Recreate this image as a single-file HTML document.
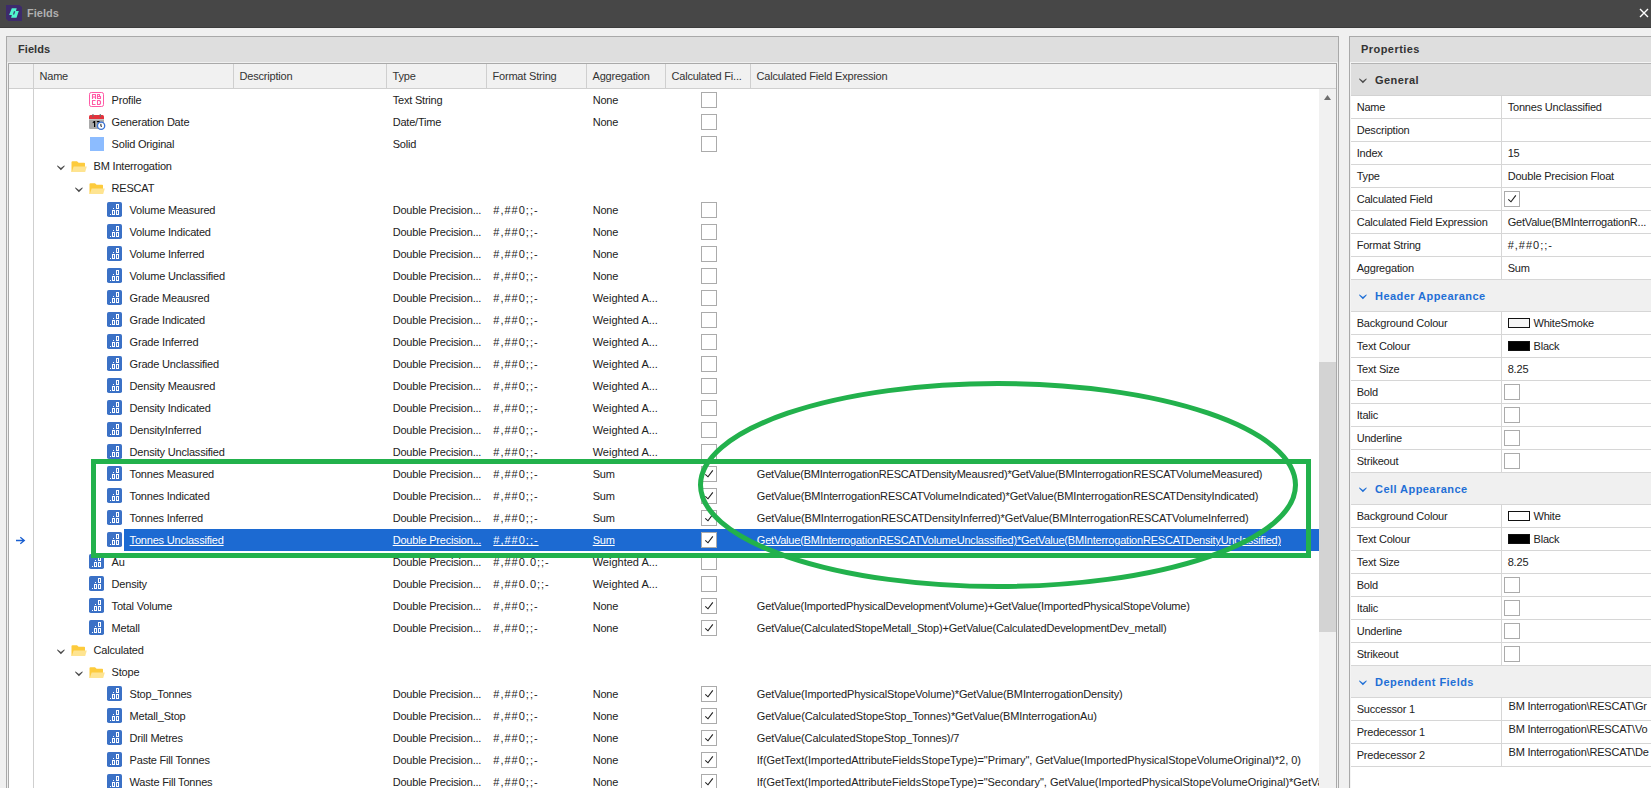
<!DOCTYPE html>
<html><head><meta charset="utf-8"><style>
html,body{margin:0;padding:0}
body{width:1651px;height:788px;overflow:hidden;position:relative;background:#f0f0f0;font-family:"Liberation Sans", sans-serif;font-size:11px}
body div, body svg{position:absolute}
.t{white-space:pre;letter-spacing:-0.2px}
</style></head><body>
<div style="left:0px;top:0px;width:1651px;height:27px;background:#474747"></div>
<div style="left:0px;top:27px;width:1651px;height:1px;background:#3c3c3c"></div>
<svg style="left:6px;top:5px;" width="16" height="16" viewBox="0 0 16 16"><path d="M0 0H13.5L16 2.2V16H2.2L0 13.5Z" fill="#3d2b6c"/><path d="M5.8 3.2H10.7L9.9 6.2H7.9L6.9 9.9H3.1Z" fill="#50f5cd"/><path d="M9.3 5.9H12.8L10.5 12.8H5.1L6.0 9.6H8.2Z" fill="#50f5cd"/></svg>
<div class="t" style="left:27px;top:2px;height:22px;line-height:22px;font-weight:bold;font-size:11px;color:#b0b0b0;letter-spacing:0">Fields</div>
<svg style="left:1639px;top:8px;" width="10" height="10" viewBox="0 0 10 10"><path d="M1 1L9 9M9 1L1 9" stroke="#ffffff" stroke-width="1.4"/></svg>
<div style="left:6px;top:36px;width:1333px;height:760px;background:#f0f0f0;border:1px solid #a9a9a9;box-sizing:border-box"></div>
<div style="left:7px;top:37px;width:1331px;height:25px;background:#dedede"></div>
<div class="t" style="left:18px;top:38px;height:22px;line-height:22px;font-weight:bold;font-size:11px;color:#333333;letter-spacing:0.05px">Fields</div>
<div style="left:8px;top:63px;width:1329px;height:740px;background:#ffffff;border:1px solid #a9a9a9;box-sizing:border-box"></div>
<div style="left:9px;top:64px;width:1327px;height:24px;background:#f1f1f1"></div>
<div style="left:9px;top:88px;width:1310px;height:1px;background:#cfcfcf"></div>
<div style="left:1319px;top:88px;width:17px;height:1px;background:#cfcfcf"></div>
<div style="left:33px;top:64px;width:1px;height:730px;background:#cfcfcf"></div>
<div style="left:233px;top:64px;width:1px;height:24px;background:#cfcfcf"></div>
<div style="left:386px;top:64px;width:1px;height:24px;background:#cfcfcf"></div>
<div style="left:486px;top:64px;width:1px;height:24px;background:#cfcfcf"></div>
<div style="left:586px;top:64px;width:1px;height:24px;background:#cfcfcf"></div>
<div style="left:665px;top:64px;width:1px;height:24px;background:#cfcfcf"></div>
<div style="left:750px;top:64px;width:1px;height:24px;background:#cfcfcf"></div>
<div class="t" style="left:39.5px;top:65px;height:22px;line-height:22px;color:#333333">Name</div>
<div class="t" style="left:239.5px;top:65px;height:22px;line-height:22px;color:#333333">Description</div>
<div class="t" style="left:392.5px;top:65px;height:22px;line-height:22px;color:#333333">Type</div>
<div class="t" style="left:492.5px;top:65px;height:22px;line-height:22px;color:#333333">Format String</div>
<div class="t" style="left:592.5px;top:65px;height:22px;line-height:22px;color:#333333">Aggregation</div>
<div class="t" style="left:671.5px;top:65px;height:22px;line-height:22px;color:#333333">Calculated Fi...</div>
<div class="t" style="left:756.5px;top:65px;height:22px;line-height:22px;color:#333333">Calculated Field Expression</div>
<div style="left:1319px;top:89px;width:17px;height:700px;background:#f1f1f1"></div>
<div style="left:1319px;top:362px;width:17px;height:270px;background:#d3d3d3"></div>
<svg style="left:1323px;top:94px;" width="9" height="7" viewBox="0 0 9 7"><path d="M1 6H8L4.5 1Z" fill="#6e6e6e"/></svg>
<div style="left:9px;top:89px;width:1310px;height:699px;overflow:hidden">
<div class="t" style="left:102.6px;top:0px;height:22px;line-height:22px;color:#222222;">Profile</div>
<div class="t" style="left:383.7px;top:0px;height:22px;line-height:22px;color:#222222;">Text String</div>
<div class="t" style="left:583.7px;top:0px;height:22px;line-height:22px;color:#222222;">None</div>
<svg style="left:692px;top:3px;" width="16" height="16" viewBox="0 0 16 16"><rect x="0.5" y="0.5" width="15" height="15" fill="#ffffff" stroke="#ababab"/></svg>
<div class="t" style="left:102.6px;top:22px;height:22px;line-height:22px;color:#222222;">Generation Date</div>
<div class="t" style="left:383.7px;top:22px;height:22px;line-height:22px;color:#222222;">Date/Time</div>
<div class="t" style="left:583.7px;top:22px;height:22px;line-height:22px;color:#222222;">None</div>
<svg style="left:692px;top:25px;" width="16" height="16" viewBox="0 0 16 16"><rect x="0.5" y="0.5" width="15" height="15" fill="#ffffff" stroke="#ababab"/></svg>
<div class="t" style="left:102.6px;top:44px;height:22px;line-height:22px;color:#222222;">Solid Original</div>
<div class="t" style="left:383.7px;top:44px;height:22px;line-height:22px;color:#222222;">Solid</div>
<svg style="left:692px;top:47px;" width="16" height="16" viewBox="0 0 16 16"><rect x="0.5" y="0.5" width="15" height="15" fill="#ffffff" stroke="#ababab"/></svg>
<svg style="left:48px;top:76px;" width="9" height="6" viewBox="0 0 9 6"><path d="M0.3 0.3L3.9 3.1L7.5 0.3V1.6L3.9 5.2L0.3 1.6Z" fill="#4a4a4a"/></svg>
<svg style="left:62px;top:72px;" width="17" height="12" viewBox="0 0 17 12"><path d="M0.5 1.2Q0.5 0.2 1.5 0.2H6L7.6 1.7H13.2Q14 1.7 14 2.5V11H0.5Z" fill="#fdcb3c"/><path d="M2.6 5.4H15.8L14.2 11H0.8Z" fill="#fee491"/></svg>
<div class="t" style="left:84.6px;top:66px;height:22px;line-height:22px;color:#222222;">BM Interrogation</div>
<svg style="left:66px;top:98px;" width="9" height="6" viewBox="0 0 9 6"><path d="M0.3 0.3L3.9 3.1L7.5 0.3V1.6L3.9 5.2L0.3 1.6Z" fill="#4a4a4a"/></svg>
<svg style="left:80px;top:94px;" width="17" height="12" viewBox="0 0 17 12"><path d="M0.5 1.2Q0.5 0.2 1.5 0.2H6L7.6 1.7H13.2Q14 1.7 14 2.5V11H0.5Z" fill="#fdcb3c"/><path d="M2.6 5.4H15.8L14.2 11H0.8Z" fill="#fee491"/></svg>
<div class="t" style="left:102.6px;top:88px;height:22px;line-height:22px;color:#222222;">RESCAT</div>

<div class="t" style="left:120.6px;top:110px;height:22px;line-height:22px;color:#222222;">Volume Measured</div>
<div class="t" style="left:383.7px;top:110px;height:22px;line-height:22px;color:#222222;">Double Precision...</div>
<div class="t" style="left:484.3px;top:110px;height:22px;line-height:22px;color:#222222;letter-spacing:1px">#,##0;;-</div>
<div class="t" style="left:583.7px;top:110px;height:22px;line-height:22px;color:#222222;">None</div>
<svg style="left:692px;top:113px;" width="16" height="16" viewBox="0 0 16 16"><rect x="0.5" y="0.5" width="15" height="15" fill="#ffffff" stroke="#ababab"/></svg>

<div class="t" style="left:120.6px;top:132px;height:22px;line-height:22px;color:#222222;">Volume Indicated</div>
<div class="t" style="left:383.7px;top:132px;height:22px;line-height:22px;color:#222222;">Double Precision...</div>
<div class="t" style="left:484.3px;top:132px;height:22px;line-height:22px;color:#222222;letter-spacing:1px">#,##0;;-</div>
<div class="t" style="left:583.7px;top:132px;height:22px;line-height:22px;color:#222222;">None</div>
<svg style="left:692px;top:135px;" width="16" height="16" viewBox="0 0 16 16"><rect x="0.5" y="0.5" width="15" height="15" fill="#ffffff" stroke="#ababab"/></svg>

<div class="t" style="left:120.6px;top:154px;height:22px;line-height:22px;color:#222222;">Volume Inferred</div>
<div class="t" style="left:383.7px;top:154px;height:22px;line-height:22px;color:#222222;">Double Precision...</div>
<div class="t" style="left:484.3px;top:154px;height:22px;line-height:22px;color:#222222;letter-spacing:1px">#,##0;;-</div>
<div class="t" style="left:583.7px;top:154px;height:22px;line-height:22px;color:#222222;">None</div>
<svg style="left:692px;top:157px;" width="16" height="16" viewBox="0 0 16 16"><rect x="0.5" y="0.5" width="15" height="15" fill="#ffffff" stroke="#ababab"/></svg>

<div class="t" style="left:120.6px;top:176px;height:22px;line-height:22px;color:#222222;">Volume Unclassified</div>
<div class="t" style="left:383.7px;top:176px;height:22px;line-height:22px;color:#222222;">Double Precision...</div>
<div class="t" style="left:484.3px;top:176px;height:22px;line-height:22px;color:#222222;letter-spacing:1px">#,##0;;-</div>
<div class="t" style="left:583.7px;top:176px;height:22px;line-height:22px;color:#222222;">None</div>
<svg style="left:692px;top:179px;" width="16" height="16" viewBox="0 0 16 16"><rect x="0.5" y="0.5" width="15" height="15" fill="#ffffff" stroke="#ababab"/></svg>

<div class="t" style="left:120.6px;top:198px;height:22px;line-height:22px;color:#222222;">Grade Meausred</div>
<div class="t" style="left:383.7px;top:198px;height:22px;line-height:22px;color:#222222;">Double Precision...</div>
<div class="t" style="left:484.3px;top:198px;height:22px;line-height:22px;color:#222222;letter-spacing:1px">#,##0;;-</div>
<div class="t" style="left:583.7px;top:198px;height:22px;line-height:22px;color:#222222;letter-spacing:0px">Weighted A...</div>
<svg style="left:692px;top:201px;" width="16" height="16" viewBox="0 0 16 16"><rect x="0.5" y="0.5" width="15" height="15" fill="#ffffff" stroke="#ababab"/></svg>

<div class="t" style="left:120.6px;top:220px;height:22px;line-height:22px;color:#222222;">Grade Indicated</div>
<div class="t" style="left:383.7px;top:220px;height:22px;line-height:22px;color:#222222;">Double Precision...</div>
<div class="t" style="left:484.3px;top:220px;height:22px;line-height:22px;color:#222222;letter-spacing:1px">#,##0;;-</div>
<div class="t" style="left:583.7px;top:220px;height:22px;line-height:22px;color:#222222;letter-spacing:0px">Weighted A...</div>
<svg style="left:692px;top:223px;" width="16" height="16" viewBox="0 0 16 16"><rect x="0.5" y="0.5" width="15" height="15" fill="#ffffff" stroke="#ababab"/></svg>

<div class="t" style="left:120.6px;top:242px;height:22px;line-height:22px;color:#222222;">Grade Inferred</div>
<div class="t" style="left:383.7px;top:242px;height:22px;line-height:22px;color:#222222;">Double Precision...</div>
<div class="t" style="left:484.3px;top:242px;height:22px;line-height:22px;color:#222222;letter-spacing:1px">#,##0;;-</div>
<div class="t" style="left:583.7px;top:242px;height:22px;line-height:22px;color:#222222;letter-spacing:0px">Weighted A...</div>
<svg style="left:692px;top:245px;" width="16" height="16" viewBox="0 0 16 16"><rect x="0.5" y="0.5" width="15" height="15" fill="#ffffff" stroke="#ababab"/></svg>

<div class="t" style="left:120.6px;top:264px;height:22px;line-height:22px;color:#222222;">Grade Unclassified</div>
<div class="t" style="left:383.7px;top:264px;height:22px;line-height:22px;color:#222222;">Double Precision...</div>
<div class="t" style="left:484.3px;top:264px;height:22px;line-height:22px;color:#222222;letter-spacing:1px">#,##0;;-</div>
<div class="t" style="left:583.7px;top:264px;height:22px;line-height:22px;color:#222222;letter-spacing:0px">Weighted A...</div>
<svg style="left:692px;top:267px;" width="16" height="16" viewBox="0 0 16 16"><rect x="0.5" y="0.5" width="15" height="15" fill="#ffffff" stroke="#ababab"/></svg>

<div class="t" style="left:120.6px;top:286px;height:22px;line-height:22px;color:#222222;">Density Meausred</div>
<div class="t" style="left:383.7px;top:286px;height:22px;line-height:22px;color:#222222;">Double Precision...</div>
<div class="t" style="left:484.3px;top:286px;height:22px;line-height:22px;color:#222222;letter-spacing:1px">#,##0;;-</div>
<div class="t" style="left:583.7px;top:286px;height:22px;line-height:22px;color:#222222;letter-spacing:0px">Weighted A...</div>
<svg style="left:692px;top:289px;" width="16" height="16" viewBox="0 0 16 16"><rect x="0.5" y="0.5" width="15" height="15" fill="#ffffff" stroke="#ababab"/></svg>

<div class="t" style="left:120.6px;top:308px;height:22px;line-height:22px;color:#222222;">Density Indicated</div>
<div class="t" style="left:383.7px;top:308px;height:22px;line-height:22px;color:#222222;">Double Precision...</div>
<div class="t" style="left:484.3px;top:308px;height:22px;line-height:22px;color:#222222;letter-spacing:1px">#,##0;;-</div>
<div class="t" style="left:583.7px;top:308px;height:22px;line-height:22px;color:#222222;letter-spacing:0px">Weighted A...</div>
<svg style="left:692px;top:311px;" width="16" height="16" viewBox="0 0 16 16"><rect x="0.5" y="0.5" width="15" height="15" fill="#ffffff" stroke="#ababab"/></svg>

<div class="t" style="left:120.6px;top:330px;height:22px;line-height:22px;color:#222222;">DensityInferred</div>
<div class="t" style="left:383.7px;top:330px;height:22px;line-height:22px;color:#222222;">Double Precision...</div>
<div class="t" style="left:484.3px;top:330px;height:22px;line-height:22px;color:#222222;letter-spacing:1px">#,##0;;-</div>
<div class="t" style="left:583.7px;top:330px;height:22px;line-height:22px;color:#222222;letter-spacing:0px">Weighted A...</div>
<svg style="left:692px;top:333px;" width="16" height="16" viewBox="0 0 16 16"><rect x="0.5" y="0.5" width="15" height="15" fill="#ffffff" stroke="#ababab"/></svg>

<div class="t" style="left:120.6px;top:352px;height:22px;line-height:22px;color:#222222;">Density Unclassified</div>
<div class="t" style="left:383.7px;top:352px;height:22px;line-height:22px;color:#222222;">Double Precision...</div>
<div class="t" style="left:484.3px;top:352px;height:22px;line-height:22px;color:#222222;letter-spacing:1px">#,##0;;-</div>
<div class="t" style="left:583.7px;top:352px;height:22px;line-height:22px;color:#222222;letter-spacing:0px">Weighted A...</div>
<svg style="left:692px;top:355px;" width="16" height="16" viewBox="0 0 16 16"><rect x="0.5" y="0.5" width="15" height="15" fill="#ffffff" stroke="#ababab"/></svg>

<div class="t" style="left:120.6px;top:374px;height:22px;line-height:22px;color:#222222;">Tonnes Measured</div>
<div class="t" style="left:383.7px;top:374px;height:22px;line-height:22px;color:#222222;">Double Precision...</div>
<div class="t" style="left:484.3px;top:374px;height:22px;line-height:22px;color:#222222;letter-spacing:1px">#,##0;;-</div>
<div class="t" style="left:583.7px;top:374px;height:22px;line-height:22px;color:#222222;">Sum</div>
<svg style="left:692px;top:377px;" width="16" height="16" viewBox="0 0 16 16"><rect x="0.5" y="0.5" width="15" height="15" fill="#ffffff" stroke="#ababab"/><path d="M4.3 8.3L7 10.8L11.8 4.3" fill="none" stroke="#222222" stroke-width="1.1"/></svg>
<div class="t" style="left:747.8px;top:374px;height:22px;line-height:22px;color:#222222;letter-spacing:-0.205px">GetValue(BMInterrogationRESCATDensityMeausred)*GetValue(BMInterrogationRESCATVolumeMeasured)</div>

<div class="t" style="left:120.6px;top:396px;height:22px;line-height:22px;color:#222222;">Tonnes Indicated</div>
<div class="t" style="left:383.7px;top:396px;height:22px;line-height:22px;color:#222222;">Double Precision...</div>
<div class="t" style="left:484.3px;top:396px;height:22px;line-height:22px;color:#222222;letter-spacing:1px">#,##0;;-</div>
<div class="t" style="left:583.7px;top:396px;height:22px;line-height:22px;color:#222222;">Sum</div>
<svg style="left:692px;top:399px;" width="16" height="16" viewBox="0 0 16 16"><rect x="0.5" y="0.5" width="15" height="15" fill="#ffffff" stroke="#ababab"/><path d="M4.3 8.3L7 10.8L11.8 4.3" fill="none" stroke="#222222" stroke-width="1.1"/></svg>
<div class="t" style="left:747.8px;top:396px;height:22px;line-height:22px;color:#222222;letter-spacing:-0.152px">GetValue(BMInterrogationRESCATVolumeIndicated)*GetValue(BMInterrogationRESCATDensityIndicated)</div>

<div class="t" style="left:120.6px;top:418px;height:22px;line-height:22px;color:#222222;">Tonnes Inferred</div>
<div class="t" style="left:383.7px;top:418px;height:22px;line-height:22px;color:#222222;">Double Precision...</div>
<div class="t" style="left:484.3px;top:418px;height:22px;line-height:22px;color:#222222;letter-spacing:1px">#,##0;;-</div>
<div class="t" style="left:583.7px;top:418px;height:22px;line-height:22px;color:#222222;">Sum</div>
<svg style="left:692px;top:421px;" width="16" height="16" viewBox="0 0 16 16"><rect x="0.5" y="0.5" width="15" height="15" fill="#ffffff" stroke="#ababab"/><path d="M4.3 8.3L7 10.8L11.8 4.3" fill="none" stroke="#222222" stroke-width="1.1"/></svg>
<div class="t" style="left:747.8px;top:418px;height:22px;line-height:22px;color:#222222;letter-spacing:-0.115px">GetValue(BMInterrogationRESCATDensityInferred)*GetValue(BMInterrogationRESCATVolumeInferred)</div>
<div style="left:115px;top:440px;width:1195px;height:22px;background:#1c6ad2"></div>

<div class="t" style="left:120.6px;top:440px;height:22px;line-height:22px;color:#ffffff;text-decoration:underline;">Tonnes Unclassified</div>
<div class="t" style="left:383.7px;top:440px;height:22px;line-height:22px;color:#ffffff;text-decoration:underline;">Double Precision...</div>
<div class="t" style="left:484.3px;top:440px;height:22px;line-height:22px;color:#ffffff;text-decoration:underline;letter-spacing:1px">#,##0;;-</div>
<div class="t" style="left:583.7px;top:440px;height:22px;line-height:22px;color:#ffffff;text-decoration:underline;">Sum</div>
<svg style="left:692px;top:443px;" width="16" height="16" viewBox="0 0 16 16"><rect x="0.5" y="0.5" width="15" height="15" fill="#ffffff" stroke="#ababab"/><path d="M4.3 8.3L7 10.8L11.8 4.3" fill="none" stroke="#222222" stroke-width="1.1"/></svg>
<div class="t" style="left:747.8px;top:440px;height:22px;line-height:22px;color:#ffffff;text-decoration:underline;letter-spacing:-0.21px">GetValue(BMInterrogationRESCATVolumeUnclassified)*GetValue(BMInterrogationRESCATDensityUnclassified)</div>

<div class="t" style="left:102.6px;top:462px;height:22px;line-height:22px;color:#222222;">Au</div>
<div class="t" style="left:383.7px;top:462px;height:22px;line-height:22px;color:#222222;">Double Precision...</div>
<div class="t" style="left:484.3px;top:462px;height:22px;line-height:22px;color:#222222;letter-spacing:1px">#,##0.0;;-</div>
<div class="t" style="left:583.7px;top:462px;height:22px;line-height:22px;color:#222222;letter-spacing:0px">Weighted A...</div>
<svg style="left:692px;top:465px;" width="16" height="16" viewBox="0 0 16 16"><rect x="0.5" y="0.5" width="15" height="15" fill="#ffffff" stroke="#ababab"/></svg>

<div class="t" style="left:102.6px;top:484px;height:22px;line-height:22px;color:#222222;">Density</div>
<div class="t" style="left:383.7px;top:484px;height:22px;line-height:22px;color:#222222;">Double Precision...</div>
<div class="t" style="left:484.3px;top:484px;height:22px;line-height:22px;color:#222222;letter-spacing:1px">#,##0.0;;-</div>
<div class="t" style="left:583.7px;top:484px;height:22px;line-height:22px;color:#222222;letter-spacing:0px">Weighted A...</div>
<svg style="left:692px;top:487px;" width="16" height="16" viewBox="0 0 16 16"><rect x="0.5" y="0.5" width="15" height="15" fill="#ffffff" stroke="#ababab"/></svg>

<div class="t" style="left:102.6px;top:506px;height:22px;line-height:22px;color:#222222;">Total Volume</div>
<div class="t" style="left:383.7px;top:506px;height:22px;line-height:22px;color:#222222;">Double Precision...</div>
<div class="t" style="left:484.3px;top:506px;height:22px;line-height:22px;color:#222222;letter-spacing:1px">#,##0;;-</div>
<div class="t" style="left:583.7px;top:506px;height:22px;line-height:22px;color:#222222;">None</div>
<svg style="left:692px;top:509px;" width="16" height="16" viewBox="0 0 16 16"><rect x="0.5" y="0.5" width="15" height="15" fill="#ffffff" stroke="#ababab"/><path d="M4.3 8.3L7 10.8L11.8 4.3" fill="none" stroke="#222222" stroke-width="1.1"/></svg>
<div class="t" style="left:747.8px;top:506px;height:22px;line-height:22px;color:#222222;letter-spacing:-0.171px">GetValue(ImportedPhysicalDevelopmentVolume)+GetValue(ImportedPhysicalStopeVolume)</div>

<div class="t" style="left:102.6px;top:528px;height:22px;line-height:22px;color:#222222;">Metall</div>
<div class="t" style="left:383.7px;top:528px;height:22px;line-height:22px;color:#222222;">Double Precision...</div>
<div class="t" style="left:484.3px;top:528px;height:22px;line-height:22px;color:#222222;letter-spacing:1px">#,##0;;-</div>
<div class="t" style="left:583.7px;top:528px;height:22px;line-height:22px;color:#222222;">None</div>
<svg style="left:692px;top:531px;" width="16" height="16" viewBox="0 0 16 16"><rect x="0.5" y="0.5" width="15" height="15" fill="#ffffff" stroke="#ababab"/><path d="M4.3 8.3L7 10.8L11.8 4.3" fill="none" stroke="#222222" stroke-width="1.1"/></svg>
<div class="t" style="left:747.8px;top:528px;height:22px;line-height:22px;color:#222222;letter-spacing:-0.155px">GetValue(CalculatedStopeMetall_Stop)+GetValue(CalculatedDevelopmentDev_metall)</div>
<svg style="left:48px;top:560px;" width="9" height="6" viewBox="0 0 9 6"><path d="M0.3 0.3L3.9 3.1L7.5 0.3V1.6L3.9 5.2L0.3 1.6Z" fill="#4a4a4a"/></svg>
<svg style="left:62px;top:556px;" width="17" height="12" viewBox="0 0 17 12"><path d="M0.5 1.2Q0.5 0.2 1.5 0.2H6L7.6 1.7H13.2Q14 1.7 14 2.5V11H0.5Z" fill="#fdcb3c"/><path d="M2.6 5.4H15.8L14.2 11H0.8Z" fill="#fee491"/></svg>
<div class="t" style="left:84.6px;top:550px;height:22px;line-height:22px;color:#222222;">Calculated</div>
<svg style="left:66px;top:582px;" width="9" height="6" viewBox="0 0 9 6"><path d="M0.3 0.3L3.9 3.1L7.5 0.3V1.6L3.9 5.2L0.3 1.6Z" fill="#4a4a4a"/></svg>
<svg style="left:80px;top:578px;" width="17" height="12" viewBox="0 0 17 12"><path d="M0.5 1.2Q0.5 0.2 1.5 0.2H6L7.6 1.7H13.2Q14 1.7 14 2.5V11H0.5Z" fill="#fdcb3c"/><path d="M2.6 5.4H15.8L14.2 11H0.8Z" fill="#fee491"/></svg>
<div class="t" style="left:102.6px;top:572px;height:22px;line-height:22px;color:#222222;">Stope</div>

<div class="t" style="left:120.6px;top:594px;height:22px;line-height:22px;color:#222222;">Stop_Tonnes</div>
<div class="t" style="left:383.7px;top:594px;height:22px;line-height:22px;color:#222222;">Double Precision...</div>
<div class="t" style="left:484.3px;top:594px;height:22px;line-height:22px;color:#222222;letter-spacing:1px">#,##0;;-</div>
<div class="t" style="left:583.7px;top:594px;height:22px;line-height:22px;color:#222222;">None</div>
<svg style="left:692px;top:597px;" width="16" height="16" viewBox="0 0 16 16"><rect x="0.5" y="0.5" width="15" height="15" fill="#ffffff" stroke="#ababab"/><path d="M4.3 8.3L7 10.8L11.8 4.3" fill="none" stroke="#222222" stroke-width="1.1"/></svg>
<div class="t" style="left:747.8px;top:594px;height:22px;line-height:22px;color:#222222;letter-spacing:-0.114px">GetValue(ImportedPhysicalStopeVolume)*GetValue(BMInterrogationDensity)</div>

<div class="t" style="left:120.6px;top:616px;height:22px;line-height:22px;color:#222222;">Metall_Stop</div>
<div class="t" style="left:383.7px;top:616px;height:22px;line-height:22px;color:#222222;">Double Precision...</div>
<div class="t" style="left:484.3px;top:616px;height:22px;line-height:22px;color:#222222;letter-spacing:1px">#,##0;;-</div>
<div class="t" style="left:583.7px;top:616px;height:22px;line-height:22px;color:#222222;">None</div>
<svg style="left:692px;top:619px;" width="16" height="16" viewBox="0 0 16 16"><rect x="0.5" y="0.5" width="15" height="15" fill="#ffffff" stroke="#ababab"/><path d="M4.3 8.3L7 10.8L11.8 4.3" fill="none" stroke="#222222" stroke-width="1.1"/></svg>
<div class="t" style="left:747.8px;top:616px;height:22px;line-height:22px;color:#222222;letter-spacing:-0.089px">GetValue(CalculatedStopeStop_Tonnes)*GetValue(BMInterrogationAu)</div>

<div class="t" style="left:120.6px;top:638px;height:22px;line-height:22px;color:#222222;">Drill Metres</div>
<div class="t" style="left:383.7px;top:638px;height:22px;line-height:22px;color:#222222;">Double Precision...</div>
<div class="t" style="left:484.3px;top:638px;height:22px;line-height:22px;color:#222222;letter-spacing:1px">#,##0;;-</div>
<div class="t" style="left:583.7px;top:638px;height:22px;line-height:22px;color:#222222;">None</div>
<svg style="left:692px;top:641px;" width="16" height="16" viewBox="0 0 16 16"><rect x="0.5" y="0.5" width="15" height="15" fill="#ffffff" stroke="#ababab"/><path d="M4.3 8.3L7 10.8L11.8 4.3" fill="none" stroke="#222222" stroke-width="1.1"/></svg>
<div class="t" style="left:747.8px;top:638px;height:22px;line-height:22px;color:#222222;letter-spacing:-0.103px">GetValue(CalculatedStopeStop_Tonnes)/7</div>

<div class="t" style="left:120.6px;top:660px;height:22px;line-height:22px;color:#222222;">Paste Fill Tonnes</div>
<div class="t" style="left:383.7px;top:660px;height:22px;line-height:22px;color:#222222;">Double Precision...</div>
<div class="t" style="left:484.3px;top:660px;height:22px;line-height:22px;color:#222222;letter-spacing:1px">#,##0;;-</div>
<div class="t" style="left:583.7px;top:660px;height:22px;line-height:22px;color:#222222;">None</div>
<svg style="left:692px;top:663px;" width="16" height="16" viewBox="0 0 16 16"><rect x="0.5" y="0.5" width="15" height="15" fill="#ffffff" stroke="#ababab"/><path d="M4.3 8.3L7 10.8L11.8 4.3" fill="none" stroke="#222222" stroke-width="1.1"/></svg>
<div class="t" style="left:747.8px;top:660px;height:22px;line-height:22px;color:#222222;letter-spacing:-0.016px">If(GetText(ImportedAttributeFieldsStopeType)=&quot;Primary&quot;, GetValue(ImportedPhysicalStopeVolumeOriginal)*2, 0)</div>

<div class="t" style="left:120.6px;top:682px;height:22px;line-height:22px;color:#222222;">Waste Fill Tonnes</div>
<div class="t" style="left:383.7px;top:682px;height:22px;line-height:22px;color:#222222;">Double Precision...</div>
<div class="t" style="left:484.3px;top:682px;height:22px;line-height:22px;color:#222222;letter-spacing:1px">#,##0;;-</div>
<div class="t" style="left:583.7px;top:682px;height:22px;line-height:22px;color:#222222;">None</div>
<svg style="left:692px;top:685px;" width="16" height="16" viewBox="0 0 16 16"><rect x="0.5" y="0.5" width="15" height="15" fill="#ffffff" stroke="#ababab"/><path d="M4.3 8.3L7 10.8L11.8 4.3" fill="none" stroke="#222222" stroke-width="1.1"/></svg>
<div class="t" style="left:747.8px;top:682px;height:22px;line-height:22px;color:#222222;letter-spacing:-0.02px">If(GetText(ImportedAttributeFieldsStopeType)=&quot;Secondary&quot;, GetValue(ImportedPhysicalStopeVolumeOriginal)*GetValue(BMInterrogationDensity)</div>
</div>
<svg style="left:89px;top:92px;" width="15" height="15" viewBox="0 0 15 15"><rect x="0.5" y="0.5" width="14" height="14" rx="1.8" fill="none" stroke="#ff5aa6" stroke-width="1"/><path fill="none" stroke="#ff5aa6" stroke-width="1.1" stroke-linejoin="round" d="M3.5 7V2.5H6.5V7M3.5 5H6.5 M8.5 7V2.5H10.5V4.5H11.5V6.5H8.5 M8.5 4.5H10.5 M6.5 8.5H3.5V12.5H6.5 M8.5 8.5H10.5L11.5 9.5V11.5L10.5 12.5H8.5Z"/></svg>
<svg style="left:89px;top:114px;" width="17" height="17" viewBox="0 0 17 17"><rect x="0" y="4" width="15" height="11" rx="1" fill="#aaaaaa"/><rect x="0" y="5" width="15" height="1" fill="#c4c4c4"/><path d="M0 5V2.5Q0 1 1.5 1H13.5Q15 1 15 2.5V5Z" fill="#e3323c"/><rect x="3.4" y="0" width="1.1" height="3" fill="#6d6d6d"/><rect x="10.7" y="0" width="1.1" height="3" fill="#6d6d6d"/><path d="M3.6 8.2L5 7H6.2V13H5V8.6L3.9 9.2Z" fill="#000"/><path d="M7.5 7H10.6V8.2H8.7V9.3H10Q10.9 9.3 10.9 10.5V11Z" fill="#000"/><circle cx="12.1" cy="11.8" r="3.6" fill="#ffffff" stroke="#3a74d6" stroke-width="1.3"/><path d="M11.9 9.8V12.3H12.9" fill="none" stroke="#222" stroke-width="1"/></svg>
<div style="left:90px;top:137px;width:14px;height:14px;background:#8cbcff"></div>
<svg style="left:107px;top:202px;" width="15" height="15" viewBox="0 0 15 15"><rect x="0" y="0" width="15" height="15" rx="1.8" fill="#3b71c6"/><path shape-rendering="crispEdges" fill="#ffffff" fill-rule="evenodd" d="M3 12h1v1h-1z M6 6h1v1h-1z M5 8h3v5h-3z M6 9h1v3h-1z M9 8h3v5h-3z M10 9h1v3h-1z M9 2h3v5h-3z M10 3h1v3h-1z"/></svg>
<svg style="left:107px;top:224px;" width="15" height="15" viewBox="0 0 15 15"><rect x="0" y="0" width="15" height="15" rx="1.8" fill="#3b71c6"/><path shape-rendering="crispEdges" fill="#ffffff" fill-rule="evenodd" d="M3 12h1v1h-1z M6 6h1v1h-1z M5 8h3v5h-3z M6 9h1v3h-1z M9 8h3v5h-3z M10 9h1v3h-1z M9 2h3v5h-3z M10 3h1v3h-1z"/></svg>
<svg style="left:107px;top:246px;" width="15" height="15" viewBox="0 0 15 15"><rect x="0" y="0" width="15" height="15" rx="1.8" fill="#3b71c6"/><path shape-rendering="crispEdges" fill="#ffffff" fill-rule="evenodd" d="M3 12h1v1h-1z M6 6h1v1h-1z M5 8h3v5h-3z M6 9h1v3h-1z M9 8h3v5h-3z M10 9h1v3h-1z M9 2h3v5h-3z M10 3h1v3h-1z"/></svg>
<svg style="left:107px;top:268px;" width="15" height="15" viewBox="0 0 15 15"><rect x="0" y="0" width="15" height="15" rx="1.8" fill="#3b71c6"/><path shape-rendering="crispEdges" fill="#ffffff" fill-rule="evenodd" d="M3 12h1v1h-1z M6 6h1v1h-1z M5 8h3v5h-3z M6 9h1v3h-1z M9 8h3v5h-3z M10 9h1v3h-1z M9 2h3v5h-3z M10 3h1v3h-1z"/></svg>
<svg style="left:107px;top:290px;" width="15" height="15" viewBox="0 0 15 15"><rect x="0" y="0" width="15" height="15" rx="1.8" fill="#3b71c6"/><path shape-rendering="crispEdges" fill="#ffffff" fill-rule="evenodd" d="M3 12h1v1h-1z M6 6h1v1h-1z M5 8h3v5h-3z M6 9h1v3h-1z M9 8h3v5h-3z M10 9h1v3h-1z M9 2h3v5h-3z M10 3h1v3h-1z"/></svg>
<svg style="left:107px;top:312px;" width="15" height="15" viewBox="0 0 15 15"><rect x="0" y="0" width="15" height="15" rx="1.8" fill="#3b71c6"/><path shape-rendering="crispEdges" fill="#ffffff" fill-rule="evenodd" d="M3 12h1v1h-1z M6 6h1v1h-1z M5 8h3v5h-3z M6 9h1v3h-1z M9 8h3v5h-3z M10 9h1v3h-1z M9 2h3v5h-3z M10 3h1v3h-1z"/></svg>
<svg style="left:107px;top:334px;" width="15" height="15" viewBox="0 0 15 15"><rect x="0" y="0" width="15" height="15" rx="1.8" fill="#3b71c6"/><path shape-rendering="crispEdges" fill="#ffffff" fill-rule="evenodd" d="M3 12h1v1h-1z M6 6h1v1h-1z M5 8h3v5h-3z M6 9h1v3h-1z M9 8h3v5h-3z M10 9h1v3h-1z M9 2h3v5h-3z M10 3h1v3h-1z"/></svg>
<svg style="left:107px;top:356px;" width="15" height="15" viewBox="0 0 15 15"><rect x="0" y="0" width="15" height="15" rx="1.8" fill="#3b71c6"/><path shape-rendering="crispEdges" fill="#ffffff" fill-rule="evenodd" d="M3 12h1v1h-1z M6 6h1v1h-1z M5 8h3v5h-3z M6 9h1v3h-1z M9 8h3v5h-3z M10 9h1v3h-1z M9 2h3v5h-3z M10 3h1v3h-1z"/></svg>
<svg style="left:107px;top:378px;" width="15" height="15" viewBox="0 0 15 15"><rect x="0" y="0" width="15" height="15" rx="1.8" fill="#3b71c6"/><path shape-rendering="crispEdges" fill="#ffffff" fill-rule="evenodd" d="M3 12h1v1h-1z M6 6h1v1h-1z M5 8h3v5h-3z M6 9h1v3h-1z M9 8h3v5h-3z M10 9h1v3h-1z M9 2h3v5h-3z M10 3h1v3h-1z"/></svg>
<svg style="left:107px;top:400px;" width="15" height="15" viewBox="0 0 15 15"><rect x="0" y="0" width="15" height="15" rx="1.8" fill="#3b71c6"/><path shape-rendering="crispEdges" fill="#ffffff" fill-rule="evenodd" d="M3 12h1v1h-1z M6 6h1v1h-1z M5 8h3v5h-3z M6 9h1v3h-1z M9 8h3v5h-3z M10 9h1v3h-1z M9 2h3v5h-3z M10 3h1v3h-1z"/></svg>
<svg style="left:107px;top:422px;" width="15" height="15" viewBox="0 0 15 15"><rect x="0" y="0" width="15" height="15" rx="1.8" fill="#3b71c6"/><path shape-rendering="crispEdges" fill="#ffffff" fill-rule="evenodd" d="M3 12h1v1h-1z M6 6h1v1h-1z M5 8h3v5h-3z M6 9h1v3h-1z M9 8h3v5h-3z M10 9h1v3h-1z M9 2h3v5h-3z M10 3h1v3h-1z"/></svg>
<svg style="left:107px;top:444px;" width="15" height="15" viewBox="0 0 15 15"><rect x="0" y="0" width="15" height="15" rx="1.8" fill="#3b71c6"/><path shape-rendering="crispEdges" fill="#ffffff" fill-rule="evenodd" d="M3 12h1v1h-1z M6 6h1v1h-1z M5 8h3v5h-3z M6 9h1v3h-1z M9 8h3v5h-3z M10 9h1v3h-1z M9 2h3v5h-3z M10 3h1v3h-1z"/></svg>
<svg style="left:107px;top:466px;" width="15" height="15" viewBox="0 0 15 15"><rect x="0" y="0" width="15" height="15" rx="1.8" fill="#3b71c6"/><path shape-rendering="crispEdges" fill="#ffffff" fill-rule="evenodd" d="M3 12h1v1h-1z M6 6h1v1h-1z M5 8h3v5h-3z M6 9h1v3h-1z M9 8h3v5h-3z M10 9h1v3h-1z M9 2h3v5h-3z M10 3h1v3h-1z"/></svg>
<svg style="left:107px;top:488px;" width="15" height="15" viewBox="0 0 15 15"><rect x="0" y="0" width="15" height="15" rx="1.8" fill="#3b71c6"/><path shape-rendering="crispEdges" fill="#ffffff" fill-rule="evenodd" d="M3 12h1v1h-1z M6 6h1v1h-1z M5 8h3v5h-3z M6 9h1v3h-1z M9 8h3v5h-3z M10 9h1v3h-1z M9 2h3v5h-3z M10 3h1v3h-1z"/></svg>
<svg style="left:107px;top:510px;" width="15" height="15" viewBox="0 0 15 15"><rect x="0" y="0" width="15" height="15" rx="1.8" fill="#3b71c6"/><path shape-rendering="crispEdges" fill="#ffffff" fill-rule="evenodd" d="M3 12h1v1h-1z M6 6h1v1h-1z M5 8h3v5h-3z M6 9h1v3h-1z M9 8h3v5h-3z M10 9h1v3h-1z M9 2h3v5h-3z M10 3h1v3h-1z"/></svg>
<svg style="left:107px;top:532px;" width="15" height="15" viewBox="0 0 15 15"><rect x="0" y="0" width="15" height="15" rx="1.8" fill="#3b71c6"/><path shape-rendering="crispEdges" fill="#ffffff" fill-rule="evenodd" d="M3 12h1v1h-1z M6 6h1v1h-1z M5 8h3v5h-3z M6 9h1v3h-1z M9 8h3v5h-3z M10 9h1v3h-1z M9 2h3v5h-3z M10 3h1v3h-1z"/></svg>
<svg style="left:89px;top:554px;" width="15" height="15" viewBox="0 0 15 15"><rect x="0" y="0" width="15" height="15" rx="1.8" fill="#3b71c6"/><path shape-rendering="crispEdges" fill="#ffffff" fill-rule="evenodd" d="M3 12h1v1h-1z M6 6h1v1h-1z M5 8h3v5h-3z M6 9h1v3h-1z M9 8h3v5h-3z M10 9h1v3h-1z M9 2h3v5h-3z M10 3h1v3h-1z"/></svg>
<svg style="left:89px;top:576px;" width="15" height="15" viewBox="0 0 15 15"><rect x="0" y="0" width="15" height="15" rx="1.8" fill="#3b71c6"/><path shape-rendering="crispEdges" fill="#ffffff" fill-rule="evenodd" d="M3 12h1v1h-1z M6 6h1v1h-1z M5 8h3v5h-3z M6 9h1v3h-1z M9 8h3v5h-3z M10 9h1v3h-1z M9 2h3v5h-3z M10 3h1v3h-1z"/></svg>
<svg style="left:89px;top:598px;" width="15" height="15" viewBox="0 0 15 15"><rect x="0" y="0" width="15" height="15" rx="1.8" fill="#3b71c6"/><path shape-rendering="crispEdges" fill="#ffffff" fill-rule="evenodd" d="M3 12h1v1h-1z M6 6h1v1h-1z M5 8h3v5h-3z M6 9h1v3h-1z M9 8h3v5h-3z M10 9h1v3h-1z M9 2h3v5h-3z M10 3h1v3h-1z"/></svg>
<svg style="left:89px;top:620px;" width="15" height="15" viewBox="0 0 15 15"><rect x="0" y="0" width="15" height="15" rx="1.8" fill="#3b71c6"/><path shape-rendering="crispEdges" fill="#ffffff" fill-rule="evenodd" d="M3 12h1v1h-1z M6 6h1v1h-1z M5 8h3v5h-3z M6 9h1v3h-1z M9 8h3v5h-3z M10 9h1v3h-1z M9 2h3v5h-3z M10 3h1v3h-1z"/></svg>
<svg style="left:107px;top:686px;" width="15" height="15" viewBox="0 0 15 15"><rect x="0" y="0" width="15" height="15" rx="1.8" fill="#3b71c6"/><path shape-rendering="crispEdges" fill="#ffffff" fill-rule="evenodd" d="M3 12h1v1h-1z M6 6h1v1h-1z M5 8h3v5h-3z M6 9h1v3h-1z M9 8h3v5h-3z M10 9h1v3h-1z M9 2h3v5h-3z M10 3h1v3h-1z"/></svg>
<svg style="left:107px;top:708px;" width="15" height="15" viewBox="0 0 15 15"><rect x="0" y="0" width="15" height="15" rx="1.8" fill="#3b71c6"/><path shape-rendering="crispEdges" fill="#ffffff" fill-rule="evenodd" d="M3 12h1v1h-1z M6 6h1v1h-1z M5 8h3v5h-3z M6 9h1v3h-1z M9 8h3v5h-3z M10 9h1v3h-1z M9 2h3v5h-3z M10 3h1v3h-1z"/></svg>
<svg style="left:107px;top:730px;" width="15" height="15" viewBox="0 0 15 15"><rect x="0" y="0" width="15" height="15" rx="1.8" fill="#3b71c6"/><path shape-rendering="crispEdges" fill="#ffffff" fill-rule="evenodd" d="M3 12h1v1h-1z M6 6h1v1h-1z M5 8h3v5h-3z M6 9h1v3h-1z M9 8h3v5h-3z M10 9h1v3h-1z M9 2h3v5h-3z M10 3h1v3h-1z"/></svg>
<svg style="left:107px;top:752px;" width="15" height="15" viewBox="0 0 15 15"><rect x="0" y="0" width="15" height="15" rx="1.8" fill="#3b71c6"/><path shape-rendering="crispEdges" fill="#ffffff" fill-rule="evenodd" d="M3 12h1v1h-1z M6 6h1v1h-1z M5 8h3v5h-3z M6 9h1v3h-1z M9 8h3v5h-3z M10 9h1v3h-1z M9 2h3v5h-3z M10 3h1v3h-1z"/></svg>
<svg style="left:107px;top:774px;" width="15" height="15" viewBox="0 0 15 15"><rect x="0" y="0" width="15" height="15" rx="1.8" fill="#3b71c6"/><path shape-rendering="crispEdges" fill="#ffffff" fill-rule="evenodd" d="M3 12h1v1h-1z M6 6h1v1h-1z M5 8h3v5h-3z M6 9h1v3h-1z M9 8h3v5h-3z M10 9h1v3h-1z M9 2h3v5h-3z M10 3h1v3h-1z"/></svg>
<svg style="left:15px;top:536px;" width="11" height="9" viewBox="0 0 11 9"><path d="M1 4.5H9.5M5.3 1.2L9.3 4.5L5.3 7.8" fill="none" stroke="#1a5fd0" stroke-width="1.3"/></svg>
<div style="left:1349px;top:36px;width:304px;height:760px;background:#f0f0f0;border:1px solid #a9a9a9;box-sizing:border-box"></div>
<div style="left:1350px;top:37px;width:302px;height:25px;background:#dedede"></div>
<div class="t" style="left:1361px;top:38px;height:22px;line-height:22px;font-weight:bold;font-size:11px;color:#333333;letter-spacing:0.45px">Properties</div>
<div style="left:1350px;top:62px;width:301px;height:730px;background:#f4f4f4"></div>
<div style="left:1351px;top:63px;width:300px;height:1px;background:#b4b4b4"></div>
<div style="left:1351px;top:64px;width:300px;height:730px;background:#ffffff"></div>
<div style="left:1351px;top:64px;width:300px;height:31px;background:#dedede"></div>
<svg style="left:1359px;top:78px;" width="9" height="6" viewBox="0 0 9 6"><path d="M0.3 0.3L3.9 3.1L7.5 0.3V1.6L3.9 5.2L0.3 1.6Z" fill="#4a4a4a"/></svg>
<div class="t" style="left:1375px;top:69px;height:22px;line-height:22px;font-weight:bold;font-size:11px;color:#333333;letter-spacing:0.45px">General</div>
<div style="left:1351px;top:95px;width:300px;height:1px;background:#d2d2d2"></div>
<div class="t" style="left:1356.7px;top:96px;height:22px;line-height:22px;color:#222222">Name</div>
<div style="left:1501px;top:96px;width:1px;height:23px;background:#d6d6d6"></div>
<div style="left:1351px;top:118px;width:300px;height:1px;background:#d6d6d6"></div>
<div class="t" style="left:1507.7px;top:96px;height:22px;line-height:22px;color:#222222">Tonnes Unclassified</div>
<div class="t" style="left:1356.7px;top:119px;height:22px;line-height:22px;color:#222222">Description</div>
<div style="left:1501px;top:119px;width:1px;height:23px;background:#d6d6d6"></div>
<div style="left:1351px;top:141px;width:300px;height:1px;background:#d6d6d6"></div>
<div class="t" style="left:1356.7px;top:142px;height:22px;line-height:22px;color:#222222">Index</div>
<div style="left:1501px;top:142px;width:1px;height:23px;background:#d6d6d6"></div>
<div style="left:1351px;top:164px;width:300px;height:1px;background:#d6d6d6"></div>
<div class="t" style="left:1507.7px;top:142px;height:22px;line-height:22px;color:#222222">15</div>
<div class="t" style="left:1356.7px;top:165px;height:22px;line-height:22px;color:#222222">Type</div>
<div style="left:1501px;top:165px;width:1px;height:23px;background:#d6d6d6"></div>
<div style="left:1351px;top:187px;width:300px;height:1px;background:#d6d6d6"></div>
<div class="t" style="left:1507.7px;top:165px;height:22px;line-height:22px;color:#222222">Double Precision Float</div>
<div class="t" style="left:1356.7px;top:188px;height:22px;line-height:22px;color:#222222">Calculated Field</div>
<div style="left:1501px;top:188px;width:1px;height:23px;background:#d6d6d6"></div>
<div style="left:1351px;top:210px;width:300px;height:1px;background:#d6d6d6"></div>
<svg style="left:1504px;top:191px;" width="16" height="16" viewBox="0 0 16 16"><rect x="0.5" y="0.5" width="15" height="15" fill="#ffffff" stroke="#ababab"/><path d="M4.3 8.3L7 10.8L11.8 4.3" fill="none" stroke="#222222" stroke-width="1.1"/></svg>
<div class="t" style="left:1356.7px;top:211px;height:22px;line-height:22px;color:#222222">Calculated Field Expression</div>
<div style="left:1501px;top:211px;width:1px;height:23px;background:#d6d6d6"></div>
<div style="left:1351px;top:233px;width:300px;height:1px;background:#d6d6d6"></div>
<div class="t" style="left:1507.7px;top:211px;height:22px;line-height:22px;color:#222222">GetValue(BMInterrogationR...</div>
<div class="t" style="left:1356.7px;top:234px;height:22px;line-height:22px;color:#222222">Format String</div>
<div style="left:1501px;top:234px;width:1px;height:23px;background:#d6d6d6"></div>
<div style="left:1351px;top:256px;width:300px;height:1px;background:#d6d6d6"></div>
<div class="t" style="left:1507.7px;top:234px;height:22px;line-height:22px;color:#222222;letter-spacing:1px">#,##0;;-</div>
<div class="t" style="left:1356.7px;top:257px;height:22px;line-height:22px;color:#222222">Aggregation</div>
<div style="left:1501px;top:257px;width:1px;height:23px;background:#d6d6d6"></div>
<div style="left:1351px;top:279px;width:300px;height:1px;background:#d6d6d6"></div>
<div class="t" style="left:1507.7px;top:257px;height:22px;line-height:22px;color:#222222">Sum</div>
<div style="left:1351px;top:280px;width:300px;height:31px;background:#f0f0f0"></div>
<svg style="left:1359px;top:294px;" width="9" height="6" viewBox="0 0 9 6"><path d="M0.3 0.3L3.9 3.1L7.5 0.3V1.6L3.9 5.2L0.3 1.6Z" fill="#1f6fd6"/></svg>
<div class="t" style="left:1375px;top:285px;height:22px;line-height:22px;font-weight:bold;font-size:11px;color:#1f6fd6;letter-spacing:0.45px">Header Appearance</div>
<div style="left:1351px;top:311px;width:300px;height:1px;background:#d6d6d6"></div>
<div class="t" style="left:1356.7px;top:312px;height:22px;line-height:22px;color:#222222">Background Colour</div>
<div style="left:1501px;top:312px;width:1px;height:23px;background:#d6d6d6"></div>
<div style="left:1351px;top:334px;width:300px;height:1px;background:#d6d6d6"></div>
<div style="left:1508px;top:318px;width:22px;height:10px;background:#f5f5f5;border:1px solid #111;box-sizing:border-box"></div>
<div class="t" style="left:1533.5px;top:312px;height:22px;line-height:22px;color:#222222">WhiteSmoke</div>
<div class="t" style="left:1356.7px;top:335px;height:22px;line-height:22px;color:#222222">Text Colour</div>
<div style="left:1501px;top:335px;width:1px;height:23px;background:#d6d6d6"></div>
<div style="left:1351px;top:357px;width:300px;height:1px;background:#d6d6d6"></div>
<div style="left:1508px;top:341px;width:22px;height:10px;background:#000000;border:1px solid #111;box-sizing:border-box"></div>
<div class="t" style="left:1533.5px;top:335px;height:22px;line-height:22px;color:#222222">Black</div>
<div class="t" style="left:1356.7px;top:358px;height:22px;line-height:22px;color:#222222">Text Size</div>
<div style="left:1501px;top:358px;width:1px;height:23px;background:#d6d6d6"></div>
<div style="left:1351px;top:380px;width:300px;height:1px;background:#d6d6d6"></div>
<div class="t" style="left:1507.7px;top:358px;height:22px;line-height:22px;color:#222222">8.25</div>
<div class="t" style="left:1356.7px;top:381px;height:22px;line-height:22px;color:#222222">Bold</div>
<div style="left:1501px;top:381px;width:1px;height:23px;background:#d6d6d6"></div>
<div style="left:1351px;top:403px;width:300px;height:1px;background:#d6d6d6"></div>
<svg style="left:1504px;top:384px;" width="16" height="16" viewBox="0 0 16 16"><rect x="0.5" y="0.5" width="15" height="15" fill="#ffffff" stroke="#ababab"/></svg>
<div class="t" style="left:1356.7px;top:404px;height:22px;line-height:22px;color:#222222">Italic</div>
<div style="left:1501px;top:404px;width:1px;height:23px;background:#d6d6d6"></div>
<div style="left:1351px;top:426px;width:300px;height:1px;background:#d6d6d6"></div>
<svg style="left:1504px;top:407px;" width="16" height="16" viewBox="0 0 16 16"><rect x="0.5" y="0.5" width="15" height="15" fill="#ffffff" stroke="#ababab"/></svg>
<div class="t" style="left:1356.7px;top:427px;height:22px;line-height:22px;color:#222222">Underline</div>
<div style="left:1501px;top:427px;width:1px;height:23px;background:#d6d6d6"></div>
<div style="left:1351px;top:449px;width:300px;height:1px;background:#d6d6d6"></div>
<svg style="left:1504px;top:430px;" width="16" height="16" viewBox="0 0 16 16"><rect x="0.5" y="0.5" width="15" height="15" fill="#ffffff" stroke="#ababab"/></svg>
<div class="t" style="left:1356.7px;top:450px;height:22px;line-height:22px;color:#222222">Strikeout</div>
<div style="left:1501px;top:450px;width:1px;height:23px;background:#d6d6d6"></div>
<div style="left:1351px;top:472px;width:300px;height:1px;background:#d6d6d6"></div>
<svg style="left:1504px;top:453px;" width="16" height="16" viewBox="0 0 16 16"><rect x="0.5" y="0.5" width="15" height="15" fill="#ffffff" stroke="#ababab"/></svg>
<div style="left:1351px;top:473px;width:300px;height:31px;background:#f0f0f0"></div>
<svg style="left:1359px;top:487px;" width="9" height="6" viewBox="0 0 9 6"><path d="M0.3 0.3L3.9 3.1L7.5 0.3V1.6L3.9 5.2L0.3 1.6Z" fill="#1f6fd6"/></svg>
<div class="t" style="left:1375px;top:478px;height:22px;line-height:22px;font-weight:bold;font-size:11px;color:#1f6fd6;letter-spacing:0.45px">Cell Appearance</div>
<div style="left:1351px;top:504px;width:300px;height:1px;background:#d6d6d6"></div>
<div class="t" style="left:1356.7px;top:505px;height:22px;line-height:22px;color:#222222">Background Colour</div>
<div style="left:1501px;top:505px;width:1px;height:23px;background:#d6d6d6"></div>
<div style="left:1351px;top:527px;width:300px;height:1px;background:#d6d6d6"></div>
<div style="left:1508px;top:511px;width:22px;height:10px;background:#ffffff;border:1px solid #111;box-sizing:border-box"></div>
<div class="t" style="left:1533.5px;top:505px;height:22px;line-height:22px;color:#222222">White</div>
<div class="t" style="left:1356.7px;top:528px;height:22px;line-height:22px;color:#222222">Text Colour</div>
<div style="left:1501px;top:528px;width:1px;height:23px;background:#d6d6d6"></div>
<div style="left:1351px;top:550px;width:300px;height:1px;background:#d6d6d6"></div>
<div style="left:1508px;top:534px;width:22px;height:10px;background:#000000;border:1px solid #111;box-sizing:border-box"></div>
<div class="t" style="left:1533.5px;top:528px;height:22px;line-height:22px;color:#222222">Black</div>
<div class="t" style="left:1356.7px;top:551px;height:22px;line-height:22px;color:#222222">Text Size</div>
<div style="left:1501px;top:551px;width:1px;height:23px;background:#d6d6d6"></div>
<div style="left:1351px;top:573px;width:300px;height:1px;background:#d6d6d6"></div>
<div class="t" style="left:1507.7px;top:551px;height:22px;line-height:22px;color:#222222">8.25</div>
<div class="t" style="left:1356.7px;top:574px;height:22px;line-height:22px;color:#222222">Bold</div>
<div style="left:1501px;top:574px;width:1px;height:23px;background:#d6d6d6"></div>
<div style="left:1351px;top:596px;width:300px;height:1px;background:#d6d6d6"></div>
<svg style="left:1504px;top:577px;" width="16" height="16" viewBox="0 0 16 16"><rect x="0.5" y="0.5" width="15" height="15" fill="#ffffff" stroke="#ababab"/></svg>
<div class="t" style="left:1356.7px;top:597px;height:22px;line-height:22px;color:#222222">Italic</div>
<div style="left:1501px;top:597px;width:1px;height:23px;background:#d6d6d6"></div>
<div style="left:1351px;top:619px;width:300px;height:1px;background:#d6d6d6"></div>
<svg style="left:1504px;top:600px;" width="16" height="16" viewBox="0 0 16 16"><rect x="0.5" y="0.5" width="15" height="15" fill="#ffffff" stroke="#ababab"/></svg>
<div class="t" style="left:1356.7px;top:620px;height:22px;line-height:22px;color:#222222">Underline</div>
<div style="left:1501px;top:620px;width:1px;height:23px;background:#d6d6d6"></div>
<div style="left:1351px;top:642px;width:300px;height:1px;background:#d6d6d6"></div>
<svg style="left:1504px;top:623px;" width="16" height="16" viewBox="0 0 16 16"><rect x="0.5" y="0.5" width="15" height="15" fill="#ffffff" stroke="#ababab"/></svg>
<div class="t" style="left:1356.7px;top:643px;height:22px;line-height:22px;color:#222222">Strikeout</div>
<div style="left:1501px;top:643px;width:1px;height:23px;background:#d6d6d6"></div>
<div style="left:1351px;top:665px;width:300px;height:1px;background:#d6d6d6"></div>
<svg style="left:1504px;top:646px;" width="16" height="16" viewBox="0 0 16 16"><rect x="0.5" y="0.5" width="15" height="15" fill="#ffffff" stroke="#ababab"/></svg>
<div style="left:1351px;top:666px;width:300px;height:31px;background:#f0f0f0"></div>
<svg style="left:1359px;top:680px;" width="9" height="6" viewBox="0 0 9 6"><path d="M0.3 0.3L3.9 3.1L7.5 0.3V1.6L3.9 5.2L0.3 1.6Z" fill="#1f6fd6"/></svg>
<div class="t" style="left:1375px;top:671px;height:22px;line-height:22px;font-weight:bold;font-size:11px;color:#1f6fd6;letter-spacing:0.45px">Dependent Fields</div>
<div style="left:1351px;top:697px;width:300px;height:1px;background:#d6d6d6"></div>
<div class="t" style="left:1356.7px;top:698px;height:22px;line-height:22px;color:#222222">Successor 1</div>
<div style="left:1501px;top:698px;width:1px;height:23px;background:#d6d6d6"></div>
<div style="left:1351px;top:720px;width:300px;height:1px;background:#d6d6d6"></div>
<div class="t" style="left:1508.5px;top:695px;height:22px;line-height:22px;color:#222222">BM Interrogation\RESCAT\Gr</div>
<div class="t" style="left:1356.7px;top:721px;height:22px;line-height:22px;color:#222222">Predecessor 1</div>
<div style="left:1501px;top:721px;width:1px;height:23px;background:#d6d6d6"></div>
<div style="left:1351px;top:743px;width:300px;height:1px;background:#d6d6d6"></div>
<div class="t" style="left:1508.5px;top:718px;height:22px;line-height:22px;color:#222222">BM Interrogation\RESCAT\Vo</div>
<div class="t" style="left:1356.7px;top:744px;height:22px;line-height:22px;color:#222222">Predecessor 2</div>
<div style="left:1501px;top:744px;width:1px;height:23px;background:#d6d6d6"></div>
<div style="left:1351px;top:766px;width:300px;height:1px;background:#d6d6d6"></div>
<div class="t" style="left:1508.5px;top:741px;height:22px;line-height:22px;color:#222222">BM Interrogation\RESCAT\De</div>
<div style="left:91px;top:459px;width:1220px;height:99px;border:5px solid #22b14c;box-sizing:border-box"></div>
<svg style="left:690px;top:375px;" width="620" height="220" viewBox="0 0 620 220"><ellipse cx="308" cy="110" rx="297.5" ry="101.5" fill="none" stroke="#22b14c" stroke-width="5"/></svg>
</body></html>
